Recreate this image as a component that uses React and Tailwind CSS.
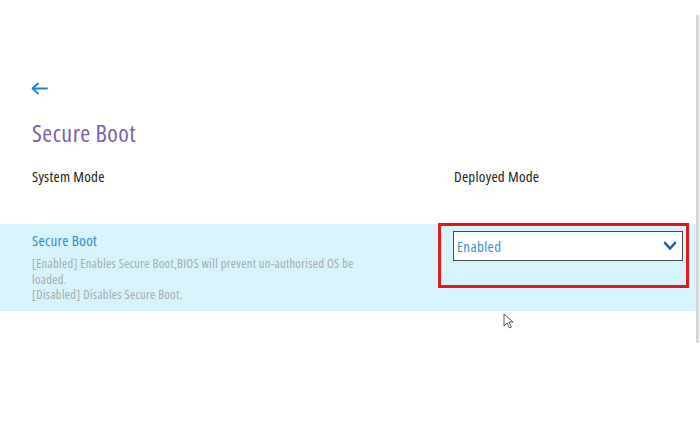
import React from 'react';

function BackArrow() {
  return (
    <svg width="17" height="13" viewBox="0 0 17 13" fill="none" stroke="#1f7fd0" strokeWidth="1.8" strokeLinecap="round" strokeLinejoin="round">
      <path d="M16 6.5H2" />
      <path d="M7 1.5L1.5 6.5L7 11.5" />
    </svg>
  );
}

function Chevron() {
  return (
    <svg width="14" height="10" viewBox="0 0 14 10" fill="none" stroke="#1a5fa8" strokeWidth="2.6" strokeLinecap="round" strokeLinejoin="round">
      <path d="M2 2L7 7.5L12 2" />
    </svg>
  );
}

function Pointer() {
  return (
    <svg width="11" height="16" viewBox="0 0 11 16" className="absolute left-[503px] top-[313px]">
      <path d="M1 1V13L4 10L6.5 15L8.5 14L6 9H10Z" fill="#fff" stroke="#555" strokeWidth="1" strokeLinejoin="round" />
    </svg>
  );
}

export default function App() {
  return (
    <div className="relative flex w-[700px] h-[430px] bg-white overflow-hidden font-['Open_Sans',sans-serif] font-stretch-condensed">
      <div className="w-[696px]">
        <div className="pl-[31px] pt-[82px] h-[95px]">
          <BackArrow />
        </div>
        <h1 className="pl-8 mt-[23px] text-[24px] leading-[30px] tracking-[0.45px] text-[#7b5fac]">Secure Boot</h1>
        <div className="flex mt-[19px] text-[15px] leading-[18px] tracking-[0.25px] text-[#222]">
          <div className="w-[454px] pl-8">System Mode</div>
          <div>Deployed Mode</div>
        </div>
        <div className="flex mt-[39px] h-[87px] bg-[#d7f4fc]">
          <div className="w-[406px] pl-8 pt-[7px]">
            <div className="text-[15px] leading-[18px] tracking-[0.3px] text-[#2f8ccb]">Secure Boot</div>
            <div className="mt-[7px] max-w-[330px] text-[12.5px] leading-[15.5px] tracking-[0.33px] text-[#a3abae]">
              [Enabled] Enables Secure Boot,BIOS will prevent un-authorised OS be loaded.
              <br />
              [Disabled] Disables Secure Boot.
            </div>
          </div>
          <div className="ml-[32px] -mt-px h-[65px] w-[251px] border-[3px] border-[#e8141c] pl-3 pr-[3px] pt-[5px]">
            <div className="flex h-[30px] items-center justify-between border-[1.5px] border-[#444b50] bg-white pl-[3px] pr-[5px]">
              <span className="text-[15px] tracking-[0.35px] text-[#3d8fd1]">Enabled</span>
              <Chevron />
            </div>
          </div>
        </div>
      </div>
      <div className="mt-[15px] h-[328px] w-[3px] bg-[#d6d6d6]" />
      <Pointer />
    </div>
  );
}
